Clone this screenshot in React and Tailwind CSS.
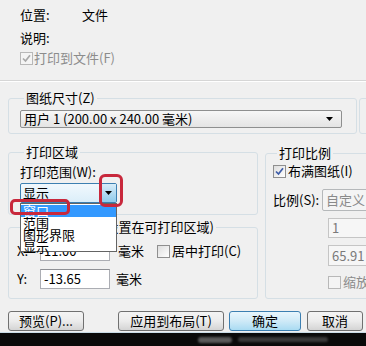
import React from 'react';

const Check = ({ checked, disabled }) => (
  <span
    className={`w-[13px] h-[13px] shrink-0 flex items-center justify-center border ${
      disabled ? 'border-[#b8b8b8] bg-[#f4f4f4]' : 'border-[#8f8f8f] bg-linear-to-br from-[#dedede] to-white'
    }`}
  >
    {checked && (
      <svg width="9" height="9" viewBox="0 0 9 9">
        <path d="M1 4.5 L3.5 7 L8 1.2" fill="none" stroke={disabled ? '#a8a8a8' : '#3d5ca8'} strokeWidth="1.7" />
      </svg>
    )}
  </span>
);

const Arrow = ({ color = '#000' }) => (
  <svg width="7" height="4" viewBox="0 0 7 4">
    <path d="M0 0h7L3.5 4z" fill={color} />
  </svg>
);

const Group = ({ title, className, children }) => (
  <fieldset className={`min-w-0 border border-[#d5dfe5] rounded-[3px] ${className}`}>
    <legend className="ml-[4px] px-[2px] leading-[16px]">{title}</legend>
    {children}
  </fieldset>
);

const Field = ({ value, disabled, className }) => (
  <div
    className={`h-[20px] flex items-center pl-[3px] border ${
      disabled ? 'border-[#c5c5c5] bg-[#f6f6f6] text-[#7a7a7a]' : 'border-[#abadb3] border-t-[#8e9095] bg-white'
    } ${className}`}
  >
    {value}
  </div>
);

const Btn = ({ children, className, primary }) => (
  <div
    className={`h-[20px] flex items-center justify-center rounded-[3px] border ${
      primary
        ? 'border-[#3c7fb1] bg-linear-to-b from-[#e8f6fd] via-[#cfeaf7] to-[#a9dbf2]'
        : 'border-[#707070] bg-linear-to-b from-[#f4f4f4] via-[#ececec] to-[#d4d4d4]'
    } ${className}`}
  >
    {children}
  </div>
);

export default function App() {
  return (
    <div className="relative w-[366px] h-[346px] overflow-hidden whitespace-nowrap bg-[#f0f0f0] text-[13px] leading-[16px] text-black font-['Noto_Sans_CJK_SC',sans-serif] flex flex-col">
      {/* printer info */}
      <div className="h-[80px] pl-[20px] pt-[7px] shrink-0">
        <div className="flex">
          <span className="w-[62px]">位置:</span>
          <span>文件</span>
        </div>
        <div className="mt-[7px]">说明:</div>
        <div className="mt-[4px] flex items-center gap-[1px] text-[#8c8c8c]">
          <Check checked disabled />
          <span>打印到文件(F)</span>
        </div>
      </div>
      <div className="h-px bg-[#d6d6d6] shrink-0" />
      <div className="h-px bg-white shrink-0" />

      {/* paper size */}
      <div className="flex items-start mt-[8px] shrink-0">
        <Group title="图纸尺寸(Z)" className="ml-[8px] w-[349px] shrink-0 pl-[11px] pb-[5px]">
          <div className="mt-[4px] w-[322px] h-[18px] flex items-center justify-between pl-[3px] pr-[8px] rounded-[2px] border border-[#8e8f8f] bg-linear-to-b from-[#f7f7f7] to-[#e4e4e4]">
            <span>用户 1 (200.00 x 240.00 毫米)</span>
            <Arrow />
          </div>
        </Group>
        <div className="ml-[2px] mt-[8px] w-[30px] h-[36px] shrink-0 border border-[#d5dfe5] rounded-[3px]" />
      </div>

      {/* plot area / offset / scale */}
      <div className="flex mt-[10px] shrink-0">
        <div className="ml-[8px] w-[250px] shrink-0 flex flex-col">
          <Group title="打印区域" className="pl-[11px] pb-[11px]">
            <div className="mt-[4px]">打印范围(W):</div>
            <div className="mt-[3px] w-[97px] h-[20px] flex rounded-[2px] border border-[#3c7fb1] bg-linear-to-b from-[#f1f8fd] to-[#dbeef9]">
              <span className="flex-1 pl-[2px] leading-[18px]">显示</span>
              <div className="w-[17px] flex items-center justify-center border-l border-[#3c7fb1] bg-linear-to-b from-[#d7ecf8] to-[#8fcbeb]">
                <Arrow />
              </div>
            </div>
          </Group>
          <Group title="打印偏移(原点设置在可打印区域)" className="mt-[4px] pl-[8px] pb-[9px]">
            <div className="mt-[6px] flex items-center">
              <span className="w-[23px]">X:</span>
              <Field value="11.00" className="w-[70px]" />
              <span className="ml-[8px]">毫米</span>
              <span className="ml-[13px] flex items-center gap-[2px]">
                <Check />
                <span>居中打印(C)</span>
              </span>
            </div>
            <div className="mt-[8px] flex items-center">
              <span className="w-[23px]">Y:</span>
              <Field value="-13.65" className="w-[70px]" />
              <span className="ml-[6px]">毫米</span>
            </div>
          </Group>
        </div>

        <Group title="打印比例" className="ml-[7px] mt-[1px] w-[112px] shrink-0 pl-[7px] pb-[8px]">
          <div className="mt-[2px] flex items-center gap-[2px]">
            <Check checked />
            <span>布满图纸(I)</span>
          </div>
          <div className="mt-[10px] flex items-center">
            <span className="w-[55px]">比例(S):</span>
            <div className="w-[60px] h-[22px] flex items-center pl-[3px] rounded-[2px] border border-[#b5b8ba] bg-[#f4f4f4] text-[#8a8a8a]">
              自定义
            </div>
          </div>
          <Field value="1" disabled className="mt-[7px] ml-[55px] w-[60px]" />
          <Field value="65.91" disabled className="mt-[7px] ml-[55px] w-[60px] h-[21px]" />
          <div className="mt-[8px] ml-[55px] flex items-center gap-[2px] text-[#8c8c8c]">
            <Check disabled />
            <span>缩放线宽</span>
          </div>
        </Group>
      </div>

      {/* buttons */}
      <div className="flex mt-[12px] shrink-0">
        <Btn className="ml-[8px] w-[76px]">预览(P)...</Btn>
        <Btn className="ml-[34px] w-[106px]">应用到布局(T)</Btn>
        <Btn primary className="ml-[5px] w-[72px]">确定</Btn>
        <Btn className="ml-[6px] w-[56px]">取消</Btn>
      </div>

      <div className="mt-auto h-[14px] shrink-0 border-t border-[#c9dbe6] bg-[#0a0a0a] flex items-center pl-[198px] gap-[6px]">
        <div className="w-[34px] h-[6px] rounded-full bg-[#5a5a5a] blur-[1px]" />
        <div className="w-[90px] h-[5px] rounded-full bg-[#3a3a3a] blur-[1px]" />
      </div>

      {/* open dropdown list */}
      <div className="absolute left-[20px] top-[203px] w-[97px] h-[49px] bg-white border border-[#646464] pt-px">
        <div className="h-[12px] leading-[12px] pl-[2px] bg-[#3399ff] text-white">窗口</div>
        <div className="h-[12px] leading-[12px] pl-[2px]">范围</div>
        <div className="h-[12px] leading-[12px] pl-[2px]">图形界限</div>
        <div className="h-[11px] leading-[12px] pl-[2px]">显示</div>
      </div>

      {/* red highlight marks */}
      <div className="absolute left-[99px] top-[174px] w-[24px] h-[33px] rounded-[6px] border-[3px] border-[#c8283c]" />
      <div className="absolute left-[10px] top-[199px] w-[60px] h-[16px] rounded-[5px] border-[3px] border-[#c8283c]" />
    </div>
  );
}
